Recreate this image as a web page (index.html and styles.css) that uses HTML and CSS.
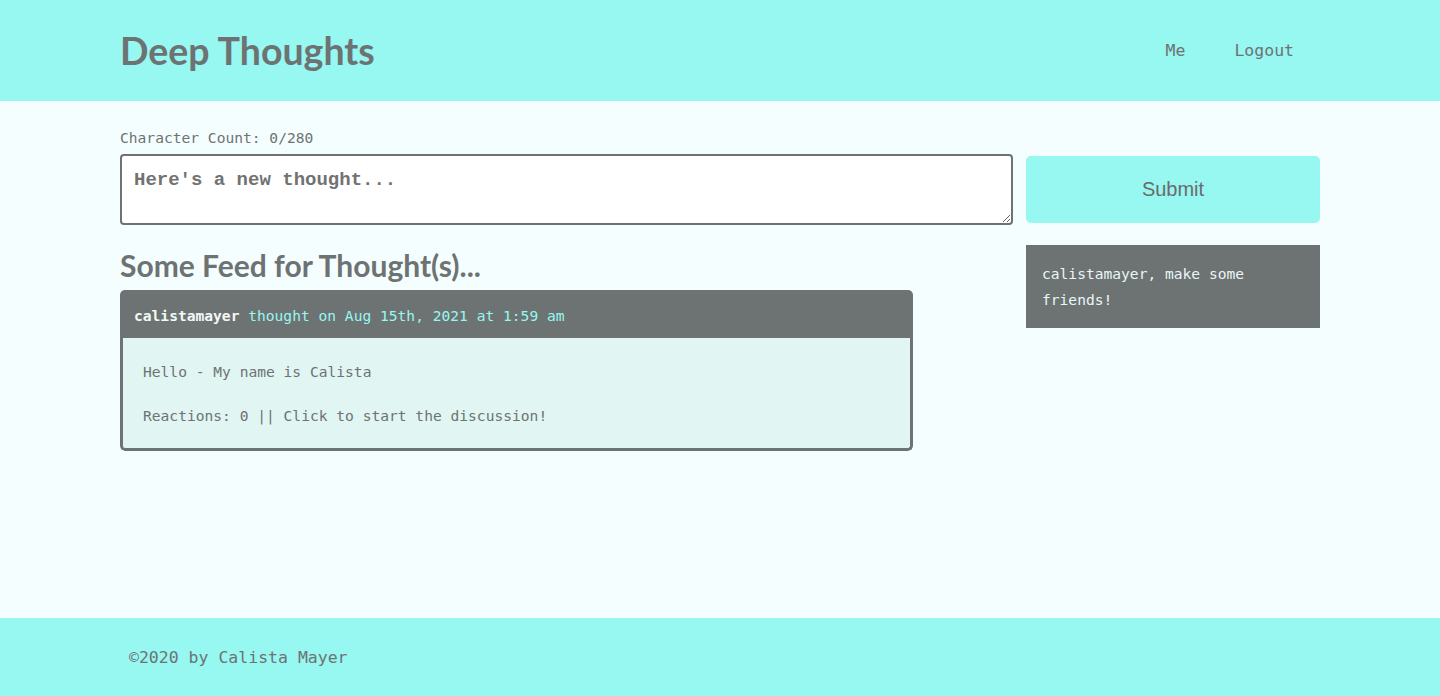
FILE: index.html
```html
<!DOCTYPE html>
<html lang="en">
<head>
<meta charset="utf-8">
<title>Deep Thoughts</title>
<link rel="stylesheet" href="styles.css">
</head>
<body>
<div class="page">
  <header class="site-header">
    <div class="container header-inner">
      <h1 class="brand">Deep Thoughts</h1>
      <nav class="nav">
        <a href="#" class="nav-link">Me</a>
        <a href="#" class="nav-link">Logout</a>
      </nav>
    </div>
  </header>
  <main class="main">
    <div class="container layout">
      <div class="form-col">
        <p class="char-count">Character Count: 0/280</p>
        <textarea class="thought-input" placeholder="Here's a new thought..."></textarea>
      </div>
      <div class="submit-col">
        <button class="submit-btn" type="button">Submit</button>
      </div>
      <section class="feed">
        <h2 class="feed-title">Some Feed for Thought(s)...</h2>
        <article class="card">
          <div class="card-header"><span class="card-user">calistamayer</span> thought on Aug 15th, 2021 at 1:59 am</div>
          <div class="card-body">
            <p class="card-text">Hello - My name is Calista</p>
            <p class="card-text">Reactions: 0 || Click to start the discussion!</p>
          </div>
        </article>
      </section>
      <aside class="friends">
        <p class="friends-text">calistamayer, make some friends!</p>
      </aside>
    </div>
  </main>
  <footer class="site-footer">
    <div class="container footer-inner">©2020 by Calista Mayer</div>
  </footer>
</div>
</body>
</html>
```
FILE: styles.css
```css
* { box-sizing: border-box; }
body {
  margin: 0;
  font-family: "DejaVu Sans Mono", "Liberation Mono", monospace;
  color: #6d7373;
  background: #f5fefe;
}
.page {
  min-height: 100vh;
  display: flex;
  flex-direction: column;
}
.container {
  width: 1200px;
  margin: 0 auto;
}
.site-header {
  background: #97f7f1;
  height: 101px;
}
.header-inner {
  height: 100%;
  display: flex;
  align-items: center;
  justify-content: space-between;
}
.brand {
  margin: 0;
  font-family: Lato, "Noto Sans", sans-serif;
  font-weight: 700;
  font-size: 37.5px;
  color: #6d7373;
}
.nav {
  display: flex;
  gap: 49px;
  padding-right: 26px;
}
.nav-link {
  font-size: 16.5px;
  color: #6d7373;
  text-decoration: none;
}
.main {
  flex: 1;
  padding-top: 27px;
}
.layout {
  display: grid;
  grid-template-columns: 893px 294px;
  column-gap: 13px;
  row-gap: 20px;
  align-items: start;
}
.char-count {
  margin: 0 0 6px;
  font-size: 14.6px;
  line-height: 20px;
}
.thought-input {
  display: block;
  width: 100%;
  height: 71px;
  border: 2px solid #6d7373;
  border-radius: 4px;
  padding: 13px 12px;
  font-family: "Liberation Mono", monospace;
  font-weight: 700;
  font-size: 19px;
  background: #fff;
  color: #6d7373;
}
.thought-input::placeholder {
  color: #727272;
  opacity: 1;
}
.submit-col {
  align-self: end;
  padding-bottom: 2px;
}
.submit-btn {
  display: block;
  width: 100%;
  height: 67px;
  border: none;
  border-radius: 5px;
  background: #97f7f1;
  color: #6b6b6b;
  font-family: "Liberation Sans", Arial, sans-serif;
  font-size: 20px;
}
.feed {
  width: 793px;
}
.feed-title {
  margin: 3px 0 8px;
  font-family: Lato, "Noto Sans", sans-serif;
  font-weight: 700;
  font-size: 30px;
  line-height: 34px;
  color: #6d7373;
}
.card {
  border-radius: 5px;
  overflow: hidden;
}
.card-header {
  background: #6d7373;
  color: #97f7f1;
  height: 48px;
  padding: 0 14px;
  line-height: 52px;
  white-space: nowrap;
  font-size: 14.6px;
}
.card-user {
  color: #f3f8f8;
  font-weight: 700;
}
.card-body {
  background: #e1f5f2;
  border: 3px solid #6d7373;
  border-top: none;
  border-radius: 0 0 5px 5px;
  padding: 24px 20px 22px;
}
.card-text {
  margin: 0 0 24px;
  font-size: 14.6px;
  line-height: 20px;
  color: #6d7373;
}
.card-text:last-child {
  margin-bottom: 0;
}
.friends {
  background: #6d7373;
  padding: 16px 16px 15px;
}
.friends-text {
  margin: 0;
  font-size: 14.6px;
  line-height: 26px;
  color: #eaf6f6;
}
.site-footer {
  background: #97f7f1;
  height: 78px;
}
.footer-inner {
  height: 100%;
  display: flex;
  align-items: center;
  padding-left: 9px;
  font-size: 16.5px;
  color: #6d7373;
}
```
